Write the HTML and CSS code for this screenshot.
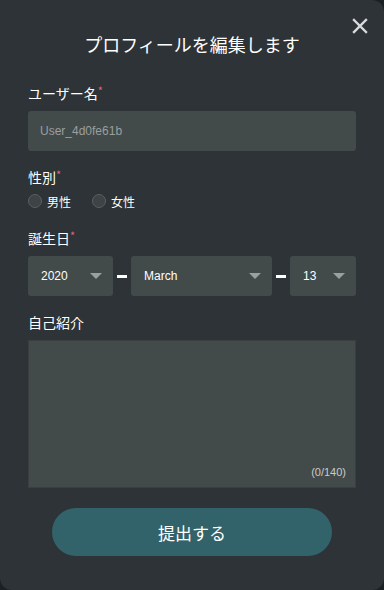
FILE: index.html
```html
<!DOCTYPE html>
<html lang="ja">
<head>
    <title>プロフィールを編集します</title>
    <link rel="stylesheet" href="styles.css">
</head>
<body>
    <div class="dialog">
        <div class="close-btn">
            <svg width="16" height="16" viewBox="0 0 16 16"><path d="M2 2 L14 14 M14 2 L2 14" stroke="#d8dadb" stroke-width="2.4" stroke-linecap="square"/></svg>
        </div>
        <h1>プロフィールを編集します</h1>

        <div class="field">
            <label class="field-label">ユーザー名<span class="req">*</span></label>
            <div class="text-input">User_4d0fe61b</div>
        </div>

        <div class="field">
            <label class="field-label">性別<span class="req">*</span></label>
            <div class="radio-row">
                <span class="radio"><span class="radio-dot"></span>男性</span>
                <span class="radio"><span class="radio-dot"></span>女性</span>
            </div>
        </div>

        <div class="field">
            <label class="field-label">誕生日<span class="req">*</span></label>
            <div class="date-row">
                <div class="select year"><span>2020</span><span class="caret"></span></div>
                <span class="dash"></span>
                <div class="select month"><span>March</span><span class="caret"></span></div>
                <span class="dash"></span>
                <div class="select day"><span>13</span><span class="caret"></span></div>
            </div>
        </div>

        <div class="field">
            <label class="field-label">自己紹介</label>
            <div class="textarea">
                <span class="counter">(0/140)</span>
            </div>
        </div>

        <div class="submit-wrap">
            <button type="button" class="submit-btn">提出する</button>
        </div>
    </div>
</body>
</html>
```

FILE: styles.css
```css
body {
    margin: 0;
    padding: 0;
    background-color: #1c2023;
    font-family: "Noto Sans CJK JP", "Noto Sans", sans-serif;
    color: #ffffff;
}
.dialog {
    width: 384px;
    height: 590px;
    box-sizing: border-box;
    background-color: #2d3336;
    border-radius: 0 12px 12px 12px;
    padding: 24px 28px 0 28px;
    position: relative;
}
.close-btn {
    position: absolute;
    top: 15px;
    right: 16px;
    width: 16px;
    height: 16px;
}
h1 {
    margin: 8px 0 27px 0;
    text-align: center;
    font-size: 18px;
    font-weight: normal;
    line-height: 24px;
}
.field {
    margin-bottom: 16px;
}
.field-label {
    display: block;
    font-size: 14px;
    line-height: 20px;
    margin-bottom: 8px;
}
.req {
    color: #e0657a;
    font-size: 11px;
    vertical-align: top;
    line-height: 14px;
}
.text-input {
    height: 40px;
    background-color: #434a4a;
    border-radius: 3px;
    padding: 0 12px;
    font-size: 12px;
    line-height: 40px;
    color: #9a9f9f;
    font-family: "Liberation Sans", Arial, sans-serif;
}
.radio-row {
    display: flex;
    gap: 21px;
    margin-top: -5px;
    height: 22px;
    align-items: center;
}
.radio {
    display: flex;
    align-items: center;
    gap: 5px;
    font-size: 12px;
}
.radio-dot {
    width: 14px;
    height: 14px;
    box-sizing: border-box;
    border-radius: 50%;
    border: 1px solid #5a6062;
    background-color: #3e4446;
}
.date-row {
    display: flex;
    align-items: center;
    gap: 4px;
}
.select {
    height: 40px;
    background-color: #434a4a;
    border-radius: 3px;
    box-sizing: border-box;
    padding: 0 11px 0 13px;
    display: flex;
    align-items: center;
    justify-content: space-between;
    font-family: "Liberation Sans", Arial, sans-serif;
    font-size: 12px;
}
.select.year {
    width: 85px;
}
.select.month {
    width: 141px;
}
.select.day {
    width: 66px;
}
.caret {
    width: 0;
    height: 0;
    border-left: 6px solid transparent;
    border-right: 6px solid transparent;
    border-top: 6px solid #9aa0a0;
}
.dash {
    width: 10px;
    height: 3px;
    background-color: #ffffff;
}
.textarea {
    height: 148px;
    background-color: #434a4a;
    box-sizing: border-box;
    border: 1px solid #3a4040;
    position: relative;
}
.counter {
    position: absolute;
    right: 9px;
    bottom: 9px;
    font-size: 11px;
    color: #c8cbcb;
    font-family: "Liberation Sans", Arial, sans-serif;
}
.submit-wrap {
    display: flex;
    justify-content: center;
    padding-top: 4px;
}
.submit-btn {
    width: 280px;
    height: 48px;
    border: none;
    border-radius: 24px;
    background-color: #33636a;
    color: #ffffff;
    font-family: "Noto Sans CJK JP", sans-serif;
    font-size: 17px;
}
```
